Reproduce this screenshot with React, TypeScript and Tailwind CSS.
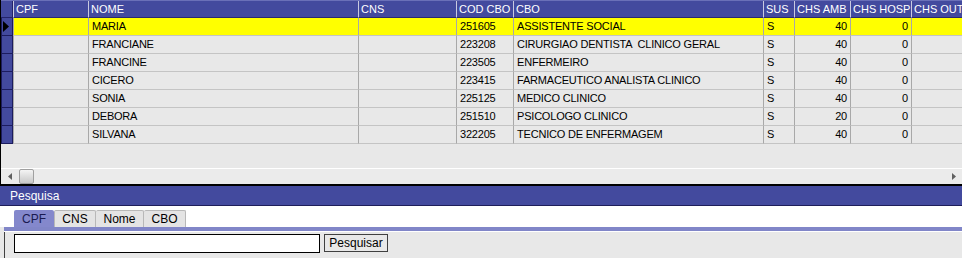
import React from "react";

const cols = [
  { key: "cpf", label: "CPF", align: "left" },
  { key: "nome", label: "NOME", align: "left" },
  { key: "cns", label: "CNS", align: "left" },
  { key: "cod", label: "COD CBO", align: "left" },
  { key: "cbo", label: "CBO", align: "left" },
  { key: "sus", label: "SUS", align: "left" },
  { key: "amb", label: "CHS AMB", align: "right" },
  { key: "hosp", label: "CHS HOSP", align: "right" },
  { key: "out", label: "CHS OUT", align: "right" },
];

const rows = [
  { cpf: "", nome: "MARIA", cns: "", cod: "251605", cbo: "ASSISTENTE SOCIAL", sus: "S", amb: "40", hosp: "0", out: "" },
  { cpf: "", nome: "FRANCIANE", cns: "", cod: "223208", cbo: "CIRURGIAO DENTISTA  CLINICO GERAL", sus: "S", amb: "40", hosp: "0", out: "" },
  { cpf: "", nome: "FRANCINE", cns: "", cod: "223505", cbo: "ENFERMEIRO", sus: "S", amb: "40", hosp: "0", out: "" },
  { cpf: "", nome: "CICERO", cns: "", cod: "223415", cbo: "FARMACEUTICO ANALISTA CLINICO", sus: "S", amb: "40", hosp: "0", out: "" },
  { cpf: "", nome: "SONIA", cns: "", cod: "225125", cbo: "MEDICO CLINICO", sus: "S", amb: "40", hosp: "0", out: "" },
  { cpf: "", nome: "DEBORA", cns: "", cod: "251510", cbo: "PSICOLOGO CLINICO", sus: "S", amb: "20", hosp: "0", out: "" },
  { cpf: "", nome: "SILVANA", cns: "", cod: "322205", cbo: "TECNICO DE ENFERMAGEM", sus: "S", amb: "40", hosp: "0", out: "" },
];

const gridCols = "grid grid-cols-[12px_75px_270px_98px_57px_250px_31px_56px_61px_51px]";

export default function App() {
  return (
    <div
      className="w-[962px] h-[258px] overflow-hidden bg-[#e8e8e8] text-[11px] leading-none"
      style={{ fontFamily: '"Liberation Sans", Arial, sans-serif' }}
    >
      {/* Grid area */}
      <div className="h-[184px] border-l border-black flex flex-col bg-[#e8e8e8]">
        <div className={gridCols + " h-[18px] bg-[#434a9e] text-white border-t border-[#6a70b8]"}>
          <div className="border-r border-[#23236a] bg-[#434a9e] border-b border-b-[#23236a]"></div>
          {cols.map((c) => (
            <div
              key={c.key}
              className="border-l border-[#c8cae0] pl-[2px] flex items-center overflow-hidden whitespace-nowrap border-b border-b-[#2a2a70]"
            >
              {c.label}
            </div>
          ))}
        </div>
        {rows.map((r, i) => {
          const sel = i === 0;
          return (
            <div key={i} className={gridCols + " h-[18px] " + (sel ? "bg-[#ffff00]" : "bg-[#e8e8e8]")}>
              <div className="bg-[#434a9e] border border-[#1c1c5e] border-t-0 flex items-center justify-start pl-[1px]">
                {sel && (
                  <svg width="6" height="11" viewBox="0 0 6 11">
                    <path d="M0 0 L6 5.5 L0 11 Z" fill="#000" />
                  </svg>
                )}
              </div>
              {cols.map((c) => (
                <div
                  key={c.key}
                  className={
                    "border-l border-l-[#a8a8a8] border-b border-b-[#c4c4c4] flex items-center overflow-hidden whitespace-pre text-black tracking-[-0.2px] " +
                    (c.align === "right" ? "justify-end pr-[3px]" : "pl-[3px]")
                  }
                >
                  {(r as any)[c.key]}
                </div>
              ))}
            </div>
          );
        })}
        <div className="flex-1"></div>
        {/* Horizontal scrollbar */}
        <div className="h-[16px] border-t border-white bg-[#ebebeb] flex items-center">
          <div className="w-[18px] flex items-center justify-center">
            <svg width="4" height="7" viewBox="0 0 4 7">
              <path d="M4 0 L0 3.5 L4 7 Z" fill="#606060" />
            </svg>
          </div>
          <div className="w-[15px] h-[15px] rounded-[2px] border border-[#a0a0a0] bg-gradient-to-b from-[#f4f4f4] to-[#c8c8c8]"></div>
          <div className="flex-1"></div>
          <div className="w-[17px] flex items-center justify-center">
            <svg width="4" height="7" viewBox="0 0 4 7">
              <path d="M0 0 L4 3.5 L0 7 Z" fill="#606060" />
            </svg>
          </div>
        </div>
      </div>
      <div className="h-[2px] bg-black"></div>
      {/* Pesquisa header */}
      <div className="h-[20px] bg-[#434a9e] border-b border-[#1e1e5a] text-white flex items-center pl-[10px] text-[12px]">
        Pesquisa
      </div>
      {/* Tabs */}
      <div className="bg-white h-[21px] flex items-end pl-[14px]">
        <div className="h-[17px] w-[40px] bg-[#8488cc] text-[#1a1a50] flex items-center justify-center text-[12px] rounded-t-[2px]">CPF</div>
        <div className="h-[17px] w-[42px] bg-[#e4e4e4] border border-b-0 border-[#b8b8b8] text-black flex items-center justify-center text-[12px] rounded-t-[2px]">CNS</div>
        <div className="h-[17px] w-[48px] bg-[#e4e4e4] border border-b-0 border-l-0 border-[#b8b8b8] text-black flex items-center justify-center text-[12px] rounded-t-[2px]">Nome</div>
        <div className="h-[17px] w-[42px] bg-[#e4e4e4] border border-b-0 border-l-0 border-[#b8b8b8] text-black flex items-center justify-center text-[12px] rounded-t-[2px]">CBO</div>
      </div>
      <div className="h-[4px] bg-[#8186c8] ml-[4px]"></div>
      <div className="h-[1px] bg-white ml-[4px]"></div>
      <div className="ml-[4px] border-l border-[#404040] h-[30px] bg-[#e8e8e8] flex items-start pt-[2px] pl-[9px] gap-[4px]">
        <div className="w-[306px] h-[19px] bg-white border border-black"></div>
        <div className="w-[64px] h-[18px] bg-[#e8e8e8] border border-[#404040] flex items-center justify-center text-[12px] text-black">
          Pesquisar
        </div>
      </div>
    </div>
  );
}
